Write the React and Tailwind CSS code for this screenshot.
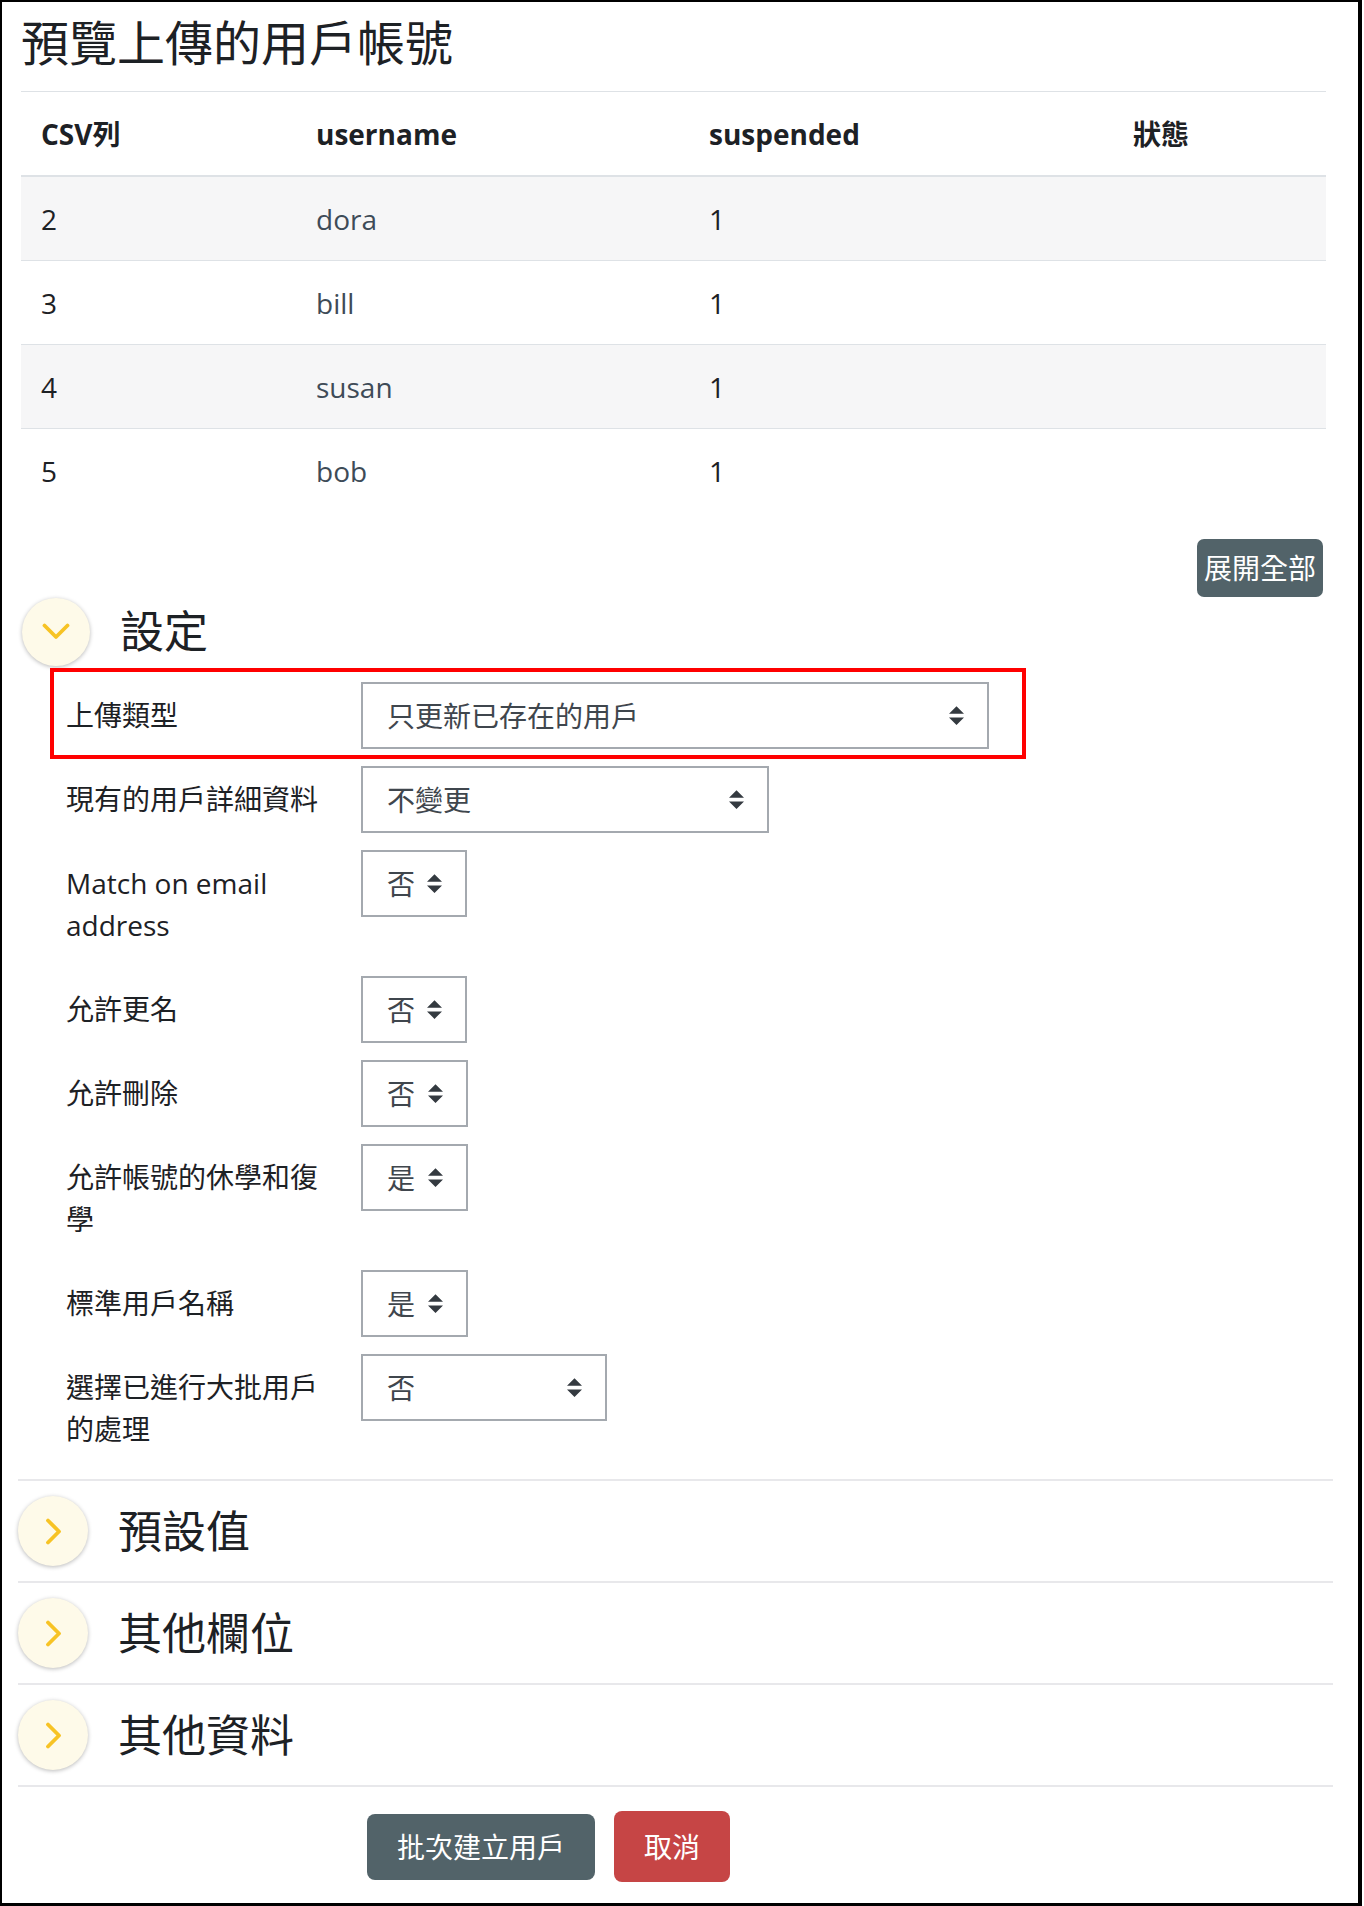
import React from "react";

const FONT = { fontFamily: '"Open Sans", "Noto Sans CJK TC", sans-serif' };

function SortArrow() {
  return (
    <svg width="15" height="19" viewBox="0 0 4 5" className="shrink-0">
      <path d="M2 0L0 2h4zm0 5L0 3h4z" fill="#343a40" />
    </svg>
  );
}

function Select({ value, width }) {
  return (
    <div
      className="h-[67px] flex items-center justify-between pl-[24px] pr-[23px] border-2 border-[#a4a9af] bg-white text-[#3f464d] shrink-0"
      style={{ width }}
    >
      <span className="leading-[42px]">{value}</span>
      <SortArrow />
    </div>
  );
}

function FormRow({ label, value, width, last, highlight }) {
  return (
    <div className={`relative flex pl-[48px] ${last ? "mb-[16px]" : "mb-[17px]"}`}>
      {highlight && (
        <div className="absolute left-[32px] top-[-14px] w-[976px] h-[91px] border-[4px] border-[#ff0000] pointer-events-none" />
      )}
      <div className="w-[295px] pr-[20px] pt-[12px] pb-[13px] leading-[42px] text-[#1d2125] shrink-0">
        {label}
      </div>
      <Select value={value} width={width} />
    </div>
  );
}

function ChevronDown() {
  return (
    <svg width="28" height="17" viewBox="0 0 28 17">
      <polyline points="2.5,2.5 14,14 25.5,2.5" fill="none" stroke="#f7c325" strokeWidth="3.8" strokeLinecap="round" strokeLinejoin="round" />
    </svg>
  );
}

function ChevronRight() {
  return (
    <svg width="17" height="27" viewBox="0 0 17 27">
      <polyline points="3,2.5 14,13.5 3,24.5" fill="none" stroke="#f7c325" strokeWidth="3.8" strokeLinecap="round" strokeLinejoin="round" />
    </svg>
  );
}

function CollapsedSection({ title }) {
  return (
    <div className="border-t-2 border-[#e8e8eb] pt-[15px] pb-[15px] flex items-center">
      <div className="w-[70px] h-[70px] rounded-full bg-[#fefae9] shadow-[0_1px_4px_rgba(0,0,0,0.28)] flex items-center justify-center shrink-0">
        <ChevronRight />
      </div>
      <div className="ml-[30px] text-[44px] leading-[53px] text-[#1d2125]">{title}</div>
    </div>
  );
}

const rows = [
  ["2", "dora", "1"],
  ["3", "bill", "1"],
  ["4", "susan", "1"],
  ["5", "bob", "1"],
];

export default function App() {
  return (
    <div className="w-[1364px] h-[1906px] bg-white text-[28px]" style={FONT}>
      <div className="w-[1362px] h-[1906px] border-l-[2px] border-t-[2px] border-r-[4px] border-b-[3px] border-black pl-[16px]">
        <div className="w-[1315px]">
          {/* Title */}
          <h2 className="mt-[12px] ml-[3px] text-[48px] leading-[58px] font-normal text-[#1d2125]">
            預覽上傳的用戶帳號
          </h2>

          {/* Table */}
          <div className="mt-[19px] ml-[3px] w-[1305px] border-t border-[#dee2e6] text-[#1d2125]">
            <div className="grid grid-cols-[275px_393px_424px_213px] h-[85px] items-center font-bold border-b-2 border-[#dee2e6]">
              <div className="pl-[20px]">CSV列</div>
              <div className="pl-[20px]">username</div>
              <div className="pl-[20px]">suspended</div>
              <div className="pl-[20px]">狀態</div>
            </div>
            {rows.map((r, i) => (
              <div
                key={r[0]}
                className={`grid grid-cols-[275px_393px_424px_213px] h-[83px] items-center ${
                  i > 0 ? "border-t border-[#dee2e6] box-content" : ""
                } ${i % 2 === 0 ? "bg-[#f6f6f7]" : "bg-white"}`}
              >
                <div className="pl-[20px]">{r[0]}</div>
                <div className="pl-[20px] text-[#3e4b57]">{r[1]}</div>
                <div className="pl-[20px]">{r[2]}</div>
                <div className="pl-[20px]"></div>
              </div>
            ))}
          </div>

          {/* Expand all */}
          <div className="flex justify-end pr-[10px] mt-[27px]">
            <button className="h-[58px] px-[7px] rounded-[7px] bg-[#526369] text-white text-[28px] leading-[42px]">
              展開全部
            </button>
          </div>

          {/* Settings header */}
          <div className="flex items-center h-[69px] pl-[4px]">
            <div className="w-[68px] h-[68px] rounded-full bg-[#fefae9] shadow-[0_1px_4px_rgba(0,0,0,0.28)] flex items-center justify-center shrink-0">
              <ChevronDown />
            </div>
            <div className="ml-[30px] text-[44px] leading-[53px] text-[#1d2125]">設定</div>
          </div>

          {/* Form */}
          <div className="mt-[16px]">
            <FormRow label="上傳類型" value="只更新已存在的用戶" width={628} highlight />
            <FormRow label="現有的用戶詳細資料" value="不變更" width={408} />
            <FormRow label="Match on email address" value="否" width={106} />
            <FormRow label="允許更名" value="否" width={106} />
            <FormRow label="允許刪除" value="否" width={107} />
            <FormRow label="允許帳號的休學和復學" value="是" width={107} />
            <FormRow label="標準用戶名稱" value="是" width={107} />
            <FormRow label="選擇已進行大批用戶的處理" value="否" width={246} last />
          </div>

          <CollapsedSection title="預設值" />
          <CollapsedSection title="其他欄位" />
          <CollapsedSection title="其他資料" />

          {/* Buttons */}
          <div className="border-t-2 border-[#e8e8eb] pt-[24px] flex items-center pl-[349px] gap-[19px]">
            <button className="h-[66px] px-[30px] rounded-[8px] bg-[#526369] text-white text-[28px] leading-[42px]">
              批次建立用戶
            </button>
            <button className="h-[71px] px-[30px] rounded-[8px] bg-[#c64545] text-white text-[28px] leading-[42px]">
              取消
            </button>
          </div>
        </div>
      </div>
    </div>
  );
}
